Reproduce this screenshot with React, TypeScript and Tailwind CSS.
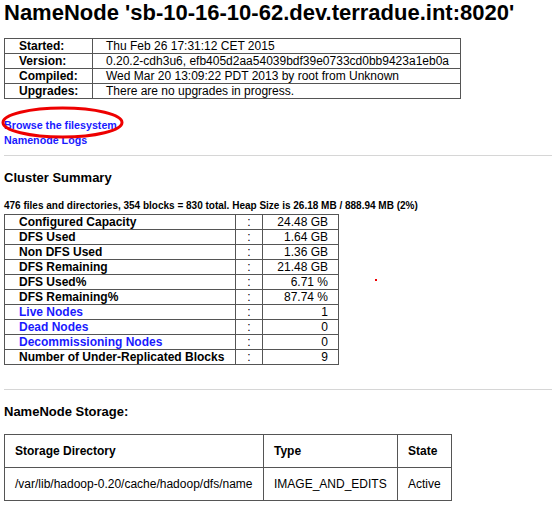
const info = [
  ["Started:", "Thu Feb 26 17:31:12 CET 2015"],
  ["Version:", "0.20.2-cdh3u6, efb405d2aa54039bdf39e0733cd0bb9423a1eb0a"],
  ["Compiled:", "Wed Mar 20 13:09:22 PDT 2013 by root from Unknown"],
  ["Upgrades:", "There are no upgrades in progress."],
];

const summary: { label: string; value: string; link?: boolean }[] = [
  { label: "Configured Capacity", value: "24.48 GB" },
  { label: "DFS Used", value: "1.64 GB" },
  { label: "Non DFS Used", value: "1.36 GB" },
  { label: "DFS Remaining", value: "21.48 GB" },
  { label: "DFS Used%", value: "6.71 %" },
  { label: "DFS Remaining%", value: "87.74 %" },
  { label: "Live Nodes", value: "1", link: true },
  { label: "Dead Nodes", value: "0", link: true },
  { label: "Decommissioning Nodes", value: "0", link: true },
  { label: "Number of Under-Replicated Blocks", value: "9" },
];

const cell = "border border-[#555] p-0";

export default function App() {
  return (
    <div className="relative w-[552px] h-[516px] bg-white overflow-hidden pl-[4px] font-['Liberation_Sans',Arial,sans-serif] text-black">
      <h1 className="text-[22px] leading-[25px] font-bold whitespace-nowrap">
        NameNode 'sb-10-16-10-62.dev.terradue.int:8020'
      </h1>

      <table className="mt-[13px] border-collapse border border-[#555] w-[457px] text-[12px] leading-[14px]">
        <tbody>
          {info.map(([k, v]) => (
            <tr key={k}>
              <td className={`${cell} w-[88px] pl-[14px] font-bold`}>{k}</td>
              <td className={`${cell} pl-[13px] whitespace-nowrap`}>{v}</td>
            </tr>
          ))}
        </tbody>
      </table>

      <div className="mt-[19px] text-[10.7px] leading-[15px] font-bold text-[#1a1aff]">
        <a className="block">Browse the filesystem</a>
        <a className="block">Namenode Logs</a>
      </div>

      <hr className="mt-[7px] border-0 border-t border-[#d6d6d6]" />

      <h3 className="mt-[14px] text-[13px] leading-[15px] font-bold">Cluster Summary</h3>

      <p className="mt-[15px] text-[10px] leading-[12px] font-bold whitespace-nowrap">
        476 files and directories, 354 blocks = 830 total. Heap Size is 26.18 MB / 888.94 MB (2%)
      </p>

      <table className="mt-[2px] border-collapse border border-[#555] w-[335px] text-[12px] leading-[14px]">
        <tbody>
          {summary.map((r) => (
            <tr key={r.label}>
              <td className={`${cell} w-[231px] pl-[14px] font-bold ${r.link ? "text-[#1a1aff]" : ""}`}>
                {r.label}
              </td>
              <td className={`${cell} w-[27px] text-center`}>:</td>
              <td className={`${cell} pr-[10px] text-right`}>{r.value}</td>
            </tr>
          ))}
        </tbody>
      </table>

      <hr className="mt-[24px] border-0 border-t border-[#d6d6d6]" />

      <h3 className="mt-[14px] text-[13px] leading-[15px] font-bold">NameNode Storage:</h3>

      <table className="mt-[15px] border-collapse border border-[#555] text-[12px] leading-[14px]">
        <thead>
          <tr className="font-bold text-left">
            <th className="border border-[#555] px-[10px] py-[9px] w-[259px]">Storage Directory</th>
            <th className="border border-[#555] px-[10px] py-[9px] w-[134px]">Type</th>
            <th className="border border-[#555] px-[10px] py-[9px] w-[54px]">State</th>
          </tr>
        </thead>
        <tbody>
          <tr>
            <td className="border border-[#555] px-[10px] py-[9px] whitespace-nowrap">
              /var/lib/hadoop-0.20/cache/hadoop/dfs/name
            </td>
            <td className="border border-[#555] px-[10px] py-[9px]">IMAGE_AND_EDITS</td>
            <td className="border border-[#555] px-[10px] py-[9px]">Active</td>
          </tr>
        </tbody>
      </table>

      {/* hand-drawn annotation */}
      <svg className="absolute left-0 top-[105px]" width="128" height="36" viewBox="0 0 128 36">
        <ellipse cx="62.5" cy="17.5" rx="59.5" ry="14.5" fill="none" stroke="#ee0000" strokeWidth="3" />
      </svg>
      <div className="absolute left-[375px] top-[279px] w-[2px] h-[2px] bg-[#e00]" />
    </div>
  );
}
